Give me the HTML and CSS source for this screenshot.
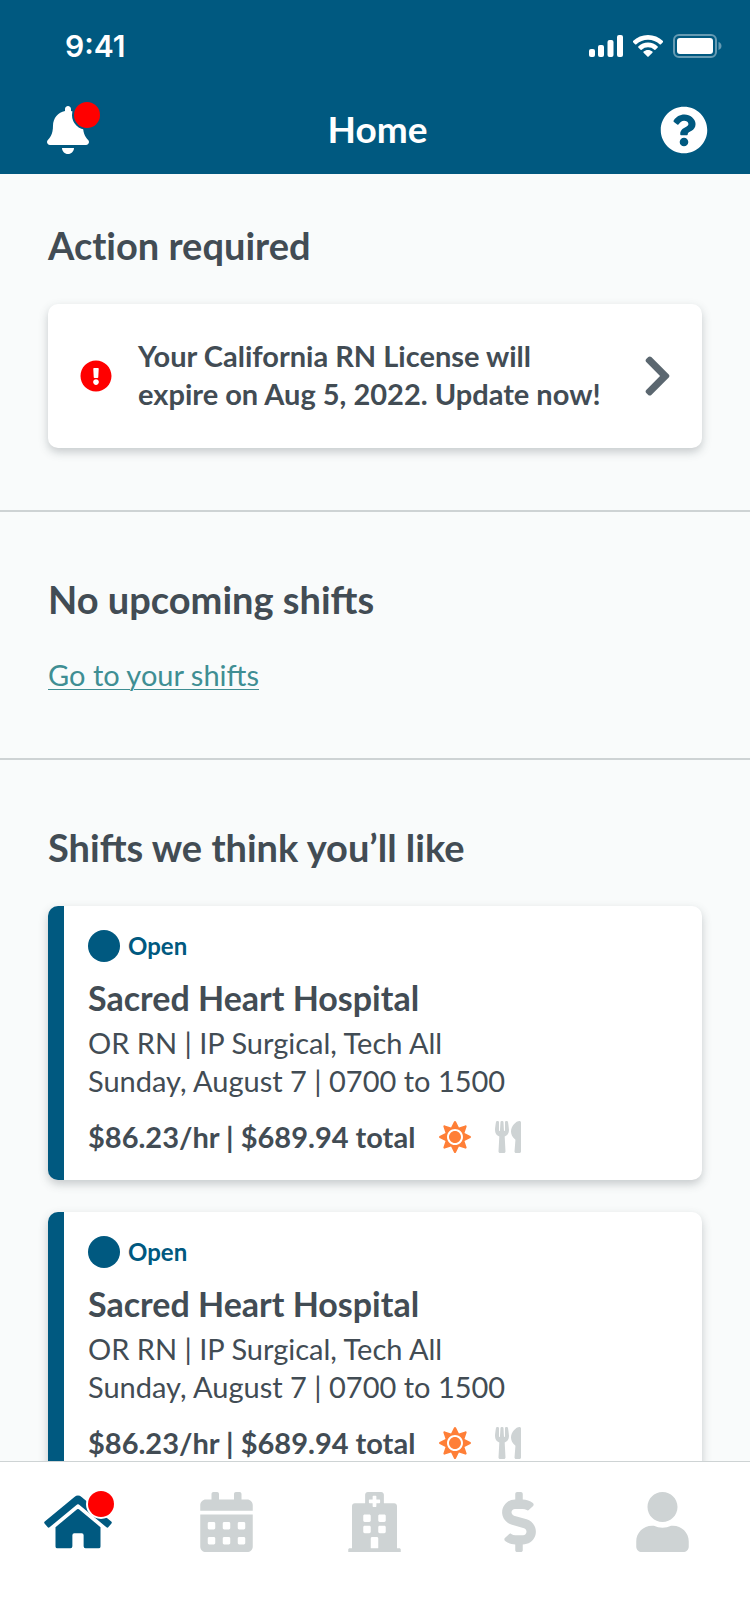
FILE: index.html
```html
<!DOCTYPE html>
<html lang="en">
<head>
    <meta charset="UTF-8">
    <meta name="viewport" content="width=device-width, initial-scale=1.0">
    <title>Home</title>
    <link rel="stylesheet" href="styles.css">
</head>
<body>
    <!-- Icons that are used more than once -->
    <svg class="icon-defs" aria-hidden="true">
        <symbol id="icon-sun" viewBox="0 0 512 512">
            <path d="M256 160c-52.9 0-96 43.1-96 96s43.1 96 96 96 96-43.1 96-96-43.1-96-96-96zm246.4 80.5l-94.7-47.3 33.5-100.4c4.5-13.6-8.4-26.5-21.9-21.9l-100.4 33.5-47.4-94.8c-6.4-12.8-24.6-12.8-31 0l-47.3 94.7L92.7 70.8c-13.6-4.5-26.5 8.4-21.9 21.9l33.5 100.4-94.7 47.4c-12.8 6.4-12.8 24.6 0 31l94.7 47.3-33.5 100.5c-4.5 13.6 8.4 26.5 21.9 21.9l100.4-33.5 47.3 94.7c6.4 12.8 24.6 12.8 31 0l47.3-94.7 100.4 33.5c13.6 4.5 26.5-8.4 21.9-21.9l-33.5-100.4 94.7-47.3c13-6.5 13-24.7.2-31.1zm-155.9 106c-49.9 49.9-131.1 49.9-181 0-49.9-49.9-49.9-131.1 0-181 49.9-49.9 131.1-49.9 181 0 49.9 49.9 49.9 131.1 0 181z"/>
        </symbol>
        <symbol id="icon-utensils" viewBox="0 0 416 512">
            <path d="M207.9 15.2c.8 4.7 16.1 94.5 16.1 128.8 0 52.3-27.8 89.6-68.9 104.6L168 486.7c.7 13.7-10.2 25.3-24 25.3H80c-13.7 0-24.7-11.5-24-25.3l12.9-238.1C27.7 233.6 0 196.2 0 144 0 109.6 15.3 19.9 16.1 15.2 19.3-5.1 61.4-5.4 64 16.3v141.2c1.3 3.4 15.1 3.2 16 0 1.4-25.3 7.9-139.2 8-141.8 3.3-20.8 44.7-20.8 47.9 0 .2 2.7 6.6 116.5 8 141.8.9 3.2 14.8 3.4 16 0V16.3c2.6-21.6 44.8-21.4 48-1.1zm119.2 285.7l-15 185.1c-1.2 14 9.9 26 23.9 26h56c13.3 0 24-10.7 24-24V24c0-13.2-10.7-24-24-24-82.5 0-221.4 178.5-64.9 300.9z"/>
        </symbol>
    </svg>

    <div class="app">
        <header class="header">
            <div class="status-bar">
                <span class="status-time">9:41</span>
                <div class="status-icons">
                    <svg width="34" height="22" viewBox="0 0 34 22" aria-hidden="true">
                        <rect x="0" y="14" width="6" height="8" rx="2"/>
                        <rect x="9" y="10" width="6" height="12" rx="2"/>
                        <rect x="18.5" y="5" width="6" height="17" rx="2"/>
                        <rect x="28" y="0" width="6" height="22" rx="2"/>
                    </svg>
                    <svg width="30" height="22" viewBox="0 0 30 22" aria-hidden="true">
                        <path d="M15 0C20.700 0 26 2.200 30 6Q30.400 6.600 29.900 7.200L27.700 9.400Q27.200 9.800 26.600 9.300A16.800 16.800 0 0 0 3.400 9.300Q2.800 9.800 2.300 9.400L.1 7.200Q-.4 6.600 0 6C4 2.200 9.300 0 15 0z"/>
                        <path d="M15 7.600C18.700 7.600 22.100 9 24.700 11.400Q25.200 12 24.700 12.500L22.400 14.700Q21.900 15.100 21.300 14.700A9.300 9.300 0 0 0 8.700 14.700Q8.100 15.100 7.600 14.700L5.300 12.500Q4.800 12 5.300 11.400C7.900 9 11.300 7.600 15 7.600z"/>
                        <path d="M15 15C16.700 15 18.200 15.600 19.400 16.600Q19.900 17.200 19.400 17.700L15.600 21.600Q15 22.200 14.400 21.600L10.600 17.700Q10.100 17.200 10.600 16.600C11.800 15.600 13.300 15 15 15z"/>
                    </svg>
                    <svg width="49" height="24" viewBox="0 0 49 24" aria-hidden="true">
                        <rect x="1" y="1" width="42" height="22" rx="5" fill="none" stroke="#fff" stroke-width="2" opacity=".4"/>
                        <rect x="4" y="4" width="36" height="16" rx="3"/>
                        <path d="M45.500 8v8C47.400 15.400 48.500 13.800 48.500 12S47.400 8.600 45.500 8z" opacity=".4"/>
                    </svg>
                </div>
            </div>
            <div class="title-bar">
                <button class="icon-button" type="button" aria-label="Notifications">
                    <svg width="42" height="48" viewBox="0 0 448 512" aria-hidden="true">
                        <path d="M224 512c35.320 0 63.970-28.650 63.970-64H160.030c0 35.350 28.650 64 63.970 64zm215.390-149.710c-19.320-20.760-55.470-51.990-55.470-154.290 0-77.700-54.480-139.900-127.940-155.160V32c0-17.670-14.320-32-31.980-32s-31.980 14.330-31.980 32v20.840C118.560 68.100 64.080 130.300 64.080 208c0 102.300-36.150 133.530-55.470 154.290-6 6.450-8.660 14.160-8.610 21.710.11 16.400 12.980 32 32.100 32h383.800c19.120 0 32-15.600 32.100-32 .05-7.550-2.610-15.270-8.610-21.710z"/>
                    </svg>
                    <span class="badge badge-bell"></span>
                </button>
                <h1 class="title">Home</h1>
                <button class="icon-button" type="button" aria-label="Help">
                    <svg width="48" height="48" viewBox="0 0 512 512" aria-hidden="true">
                        <path d="M504 256c0 136.997-111.043 248-248 248S8 392.997 8 256C8 119.083 119.043 8 256 8s248 111.083 248 248zM262.655 90c-54.497 0-89.255 22.957-116.549 63.758-3.536 5.286-2.353 12.415 2.715 16.258l34.699 26.310c5.205 3.947 12.621 3.008 16.665-2.122 17.864-22.658 30.113-35.797 57.303-35.797 20.429 0 45.698 13.148 45.698 32.958 0 14.976-12.363 22.667-32.534 33.976C247.128 238.528 216 254.941 216 296v4c0 6.627 5.373 12 12 12h56c6.627 0 12-5.373 12-12v-1.333c0-28.462 83.186-29.647 83.186-106.667 0-58.002-60.165-102-116.531-102zM256 338c-25.365 0-46 20.635-46 46 0 25.364 20.635 46 46 46s46-20.636 46-46c0-25.365-20.635-46-46-46z"/>
                    </svg>
                </button>
            </div>
        </header>

        <main class="content">
            <section class="section section-first">
                <h2 class="heading">Action required</h2>
                <a class="alert" href="#license">
                    <svg class="alert-icon" width="32" height="32" viewBox="0 0 512 512" aria-hidden="true">
                        <path d="M504 256c0 136.997-111.043 248-248 248S8 392.997 8 256C8 119.083 119.043 8 256 8s248 111.083 248 248zm-248 50c-25.405 0-46 20.595-46 46s20.595 46 46 46 46-20.595 46-46-20.595-46-46-46zm-43.673-165.346l7.418 136c.347 6.364 5.609 11.346 11.982 11.346h48.546c6.373 0 11.635-4.982 11.982-11.346l7.418-136c.375-6.874-5.098-12.654-11.982-12.654h-63.383c-6.884 0-12.356 5.780-11.981 12.654z"/>
                    </svg>
                    <span class="alert-text">Your California RN License will<br>expire on Aug 5, 2022. Update now!</span>
                    <svg class="alert-arrow" width="29" height="46" viewBox="0 0 320 512" aria-hidden="true">
                        <path d="M285.476 272.971L91.132 467.314c-9.373 9.373-24.569 9.373-33.941 0l-22.667-22.667c-9.357-9.357-9.375-24.522-.04-33.901L188.505 256 34.484 101.255c-9.335-9.379-9.317-24.544.04-33.901l22.667-22.667c9.373-9.373 24.569-9.373 33.941 0L285.475 239.030c9.373 9.372 9.373 24.568.001 33.941z"/>
                    </svg>
                </a>
            </section>

            <section class="section">
                <h2 class="heading">No upcoming shifts</h2>
                <a class="link" href="#shifts">Go to your shifts</a>
            </section>

            <section class="section">
                <h2 class="heading">Shifts we think you’ll like</h2>
                <div class="shifts">
                    <article class="shift">
                        <div class="shift-status"><span class="dot"></span>Open</div>
                        <h3 class="shift-name">Sacred Heart Hospital</h3>
                        <p class="shift-info">OR RN | IP Surgical, Tech All<br>Sunday, August 7 | 0700 to 1500</p>
                        <div class="shift-pay">
                            <span>$86.23/hr | $689.94 total</span>
                            <svg class="sun" width="32" height="32" role="img" aria-label="Day shift"><use href="#icon-sun"/></svg>
                            <svg class="utensils" width="26" height="32" role="img" aria-label="Meal break"><use href="#icon-utensils"/></svg>
                        </div>
                    </article>
                    <article class="shift">
                        <div class="shift-status"><span class="dot"></span>Open</div>
                        <h3 class="shift-name">Sacred Heart Hospital</h3>
                        <p class="shift-info">OR RN | IP Surgical, Tech All<br>Sunday, August 7 | 0700 to 1500</p>
                        <div class="shift-pay">
                            <span>$86.23/hr | $689.94 total</span>
                            <svg class="sun" width="32" height="32" role="img" aria-label="Day shift"><use href="#icon-sun"/></svg>
                            <svg class="utensils" width="26" height="32" role="img" aria-label="Meal break"><use href="#icon-utensils"/></svg>
                        </div>
                    </article>
                </div>
            </section>
        </main>

        <nav class="tabs">
            <a class="tab tab-active" href="#home" aria-label="Home">
                <svg width="68" height="60" viewBox="0 0 576 512" aria-hidden="true">
                    <path d="M280.370 148.260L96 300.110V464a16 16 0 0 0 16 16l112.060-.29a16 16 0 0 0 15.920-16V368a16 16 0 0 1 16-16h64a16 16 0 0 1 16 16v95.640a16 16 0 0 0 16 16.050L464 480a16 16 0 0 0 16-16V300L295.670 148.260a12.190 12.190 0 0 0-15.300 0zM571.600 251.470L488 182.560V44.050a12 12 0 0 0-12-12h-56a12 12 0 0 0-12 12v72.610L318.470 43a48 48 0 0 0-61 0L4.340 251.470a12 12 0 0 0-1.600 16.900l25.500 31A12 12 0 0 0 45.150 301l235.220-193.740a12.190 12.190 0 0 1 15.300 0L530.900 301a12 12 0 0 0 16.900-1.600l25.500-31a12 12 0 0 0-1.700-16.930z"/>
                </svg>
                <span class="badge badge-home"></span>
            </a>
            <a class="tab" href="#calendar" aria-label="Calendar">
                <svg width="53" height="60" viewBox="0 0 448 512" aria-hidden="true">
                    <path d="M0 464c0 26.500 21.500 48 48 48h352c26.500 0 48-21.500 48-48V192H0v272zm320-196c0-6.600 5.400-12 12-12h40c6.600 0 12 5.400 12 12v40c0 6.600-5.400 12-12 12h-40c-6.600 0-12-5.400-12-12v-40zm0 128c0-6.600 5.400-12 12-12h40c6.600 0 12 5.400 12 12v40c0 6.600-5.400 12-12 12h-40c-6.600 0-12-5.400-12-12v-40zM192 268c0-6.600 5.400-12 12-12h40c6.600 0 12 5.400 12 12v40c0 6.600-5.400 12-12 12h-40c-6.600 0-12-5.400-12-12v-40zm0 128c0-6.600 5.400-12 12-12h40c6.600 0 12 5.400 12 12v40c0 6.600-5.400 12-12 12h-40c-6.600 0-12-5.400-12-12v-40zM64 268c0-6.600 5.400-12 12-12h40c6.600 0 12 5.400 12 12v40c0 6.600-5.400 12-12 12H76c-6.600 0-12-5.400-12-12v-40zm0 128c0-6.600 5.400-12 12-12h40c6.600 0 12 5.400 12 12v40c0 6.600-5.400 12-12 12H76c-6.600 0-12-5.400-12-12v-40zM400 64h-48V16c0-8.800-7.200-16-16-16h-32c-8.800 0-16 7.200-16 16v48H160V16c0-8.800-7.200-16-16-16h-32c-8.800 0-16 7.200-16 16v48H48C21.500 64 0 85.500 0 112v48h448v-48c0-26.500-21.500-48-48-48z"/>
                </svg>
            </a>
            <a class="tab" href="#facilities" aria-label="Facilities">
                <svg width="53" height="60" viewBox="0 0 448 512" aria-hidden="true">
                    <path d="M448 492v20H0v-20c0-6.627 5.373-12 12-12h20V120c0-13.255 10.745-24 24-24h88V24c0-13.255 10.745-24 24-24h112c13.255 0 24 10.745 24 24v72h88c13.255 0 24 10.745 24 24v360h20c6.627 0 12 5.373 12 12zM308 192h-40c-6.627 0-12 5.373-12 12v40c0 6.627 5.373 12 12 12h40c6.627 0 12-5.373 12-12v-40c0-6.627-5.373-12-12-12zm-168 64h40c6.627 0 12-5.373 12-12v-40c0-6.627-5.373-12-12-12h-40c-6.627 0-12 5.373-12 12v40c0 6.627 5.373 12 12 12zm104 128h-40c-6.627 0-12 5.373-12 12v84h64v-84c0-6.627-5.373-12-12-12zm64-96h-40c-6.627 0-12 5.373-12 12v40c0 6.627 5.373 12 12 12h40c6.627 0 12-5.373 12-12v-40c0-6.627-5.373-12-12-12zm-116 12c0-6.627-5.373-12-12-12h-40c-6.627 0-12 5.373-12 12v40c0 6.627 5.373 12 12 12h40c6.627 0 12-5.373 12-12v-40zM182 96h26v26a6 6 0 0 0 6 6h20a6 6 0 0 0 6-6V96h26a6 6 0 0 0 6-6V70a6 6 0 0 0-6-6h-26V38a6 6 0 0 0-6-6h-20a6 6 0 0 0-6 6v26h-26a6 6 0 0 0-6 6v20a6 6 0 0 0 6 6z"/>
                </svg>
            </a>
            <a class="tab" href="#pay" aria-label="Pay">
                <svg width="34" height="60" viewBox="0 0 288 512" aria-hidden="true">
                    <path d="M209.200 233.400l-108-31.600C88.700 198.200 80 186.500 80 173.500c0-16.300 13.200-29.500 29.500-29.500h66.300c12.200 0 24.200 3.700 34.200 10.500 6.100 4.100 14.300 3.100 19.500-2l34.800-34c7.100-6.900 6.100-18.400-1.800-24.500C238 74.800 207.400 64.100 176 64V16c0-8.800-7.200-16-16-16h-32c-8.800 0-16 7.200-16 16v48h-2.500C45.800 64-5.400 118.700.5 183.600c4.200 46.100 39.400 83.600 83.800 96.600l102.500 30c12.500 3.700 21.200 15.300 21.200 28.300 0 16.300-13.200 29.500-29.500 29.500h-66.300C100 368 88 364.300 78 357.500c-6.100-4.100-14.300-3.100-19.500 2l-34.800 34c-7.100 6.900-6.100 18.400 1.800 24.500 24.500 19.200 55.100 29.900 86.500 30v48c0 8.800 7.200 16 16 16h32c8.800 0 16-7.200 16-16v-48.200c46.600-.9 90.300-28.600 105.700-72.700 21.500-61.600-14.600-124.800-72.500-141.700z"/>
                </svg>
            </a>
            <a class="tab" href="#profile" aria-label="Profile">
                <svg width="53" height="60" viewBox="0 0 448 512" aria-hidden="true">
                    <path d="M224 256c70.700 0 128-57.300 128-128S294.700 0 224 0 96 57.300 96 128s57.300 128 128 128zm89.600 32h-16.700c-22.200 10.200-46.900 16-72.900 16s-50.600-5.800-72.900-16h-16.700C60.200 288 0 348.200 0 422.400V464c0 26.500 21.500 48 48 48h352c26.500 0 48-21.500 48-48v-41.600c0-74.200-60.200-134.400-134.400-134.400z"/>
                </svg>
            </a>
        </nav>
    </div>
</body>
</html>
```
FILE: styles.css
```css
* {
    box-sizing: border-box;
}

body {
    margin: 0;
    font-family: Lato, "Open Sans", sans-serif;
    color: #424c54;
    background-color: #f9fbfb;
}

svg {
    display: block;
    flex-shrink: 0;
    fill: currentColor;
}

.icon-defs {
    display: none;
}

/* Header and tabs stay in place, the content between them scrolls */
.app {
    display: flex;
    flex-direction: column;
    height: 100vh;
}

/* Header */
.header {
    flex-shrink: 0;
    padding-bottom: 6px;
    color: #fff;
    background-color: #005980;
}

.status-bar {
    display: flex;
    justify-content: space-between;
    align-items: center;
    height: 92px;
    padding: 0 28px 0 65px;
}

.status-time {
    font-family: Inter, sans-serif;
    font-size: 30px;
    font-weight: 600;
}

.status-icons {
    display: flex;
    align-items: center;
    gap: 10px;
}

.title-bar {
    display: flex;
    justify-content: space-between;
    align-items: center;
    height: 76px;
    padding: 0 42px 0 47px;
}

.title {
    margin: 0;
    padding-bottom: 4px;
    font-size: 37px;
    font-weight: 700;
}

.icon-button {
    position: relative;
    display: flex;
    width: 48px;
    padding: 0;
    border: 0;
    color: inherit;
    background: none;
    cursor: pointer;
}

.badge {
    position: absolute;
    width: 26px;
    height: 26px;
    border-radius: 50%;
    background-color: #f00;
}

.badge-bell {
    top: -4px;
    left: 27px;
    box-shadow: 0 0 0 2px #005980;
}

.badge-home {
    top: -1px;
    left: 44px;
    box-shadow: 0 0 0 2px #fff;
}

/* Content */
.content {
    flex: 1;
    min-height: 0;
    overflow-y: auto;
    scrollbar-width: none;
}

.section {
    padding: 64px 48px 62px;
    border-bottom: 2px solid #ced3d4;
}

.section-first {
    padding-top: 48px;
}

.section:last-child {
    border-bottom: 0;
}

.heading {
    margin: 0 0 36px;
    font-size: 38px;
    font-weight: 700;
    line-height: 46px;
}

/* Lato joins "ti" into one glyph */
.section-first .heading {
    font-variant-ligatures: none;
}

.link {
    display: block;
    width: fit-content;
    margin-top: -2px;
    padding-bottom: 2px;
    color: #3f8e93;
    font-size: 29px;
    line-height: 38px;
    text-underline-offset: 3px;
    text-decoration-thickness: 1px;
}

/* License warning */
.alert {
    display: flex;
    align-items: center;
    padding: 33px 30px 33px 32px;
    border-radius: 10px;
    color: inherit;
    background-color: #fff;
    box-shadow: 0 4px 10px rgba(66, 76, 84, 0.28);
    font-size: 29px;
    font-weight: 700;
    line-height: 38px;
    text-decoration: none;
}

.alert-icon {
    color: #f00;
}

.alert-text {
    flex: 1;
    margin-left: 26px;
    padding-bottom: 2px;
}

.alert-arrow {
    color: #5b6770;
}

/* Shift cards */
.shifts {
    display: flex;
    flex-direction: column;
    gap: 32px;
}

.shift {
    padding: 24px;
    border-left: 16px solid #005980;
    border-radius: 10px;
    background-color: #fff;
    box-shadow: 0 4px 10px rgba(66, 76, 84, 0.28);
}

.shift-status {
    display: flex;
    align-items: center;
    gap: 8px;
    height: 32px;
    color: #005980;
    font-size: 24px;
    font-weight: 700;
    line-height: 30px;
}

.dot {
    width: 32px;
    height: 32px;
    border-radius: 50%;
    background-color: #005980;
}

.shift-name {
    margin: 16px 0 6px;
    font-size: 34px;
    font-weight: 700;
    line-height: 40px;
}

.shift-info {
    margin: 0 0 18px;
    font-size: 29px;
    line-height: 38px;
}

.shift-pay {
    display: flex;
    align-items: center;
    gap: 24px;
    font-size: 29px;
    font-weight: 700;
    line-height: 38px;
}

.sun {
    color: #ff7f37;
}

.utensils {
    color: #ced3d4;
}

/* Bottom tabs */
.tabs {
    display: grid;
    grid-template-columns: 148fr 148fr 149fr 140fr 147fr;
    flex-shrink: 0;
    padding: 30px 14px 72px 4px;
    border-top: 1px solid #ced3d4;
    background-color: #fff;
}

.tab {
    position: relative;
    justify-self: center;
    color: #ced3d4;
}

.tab-active {
    color: #005980;
}
```
